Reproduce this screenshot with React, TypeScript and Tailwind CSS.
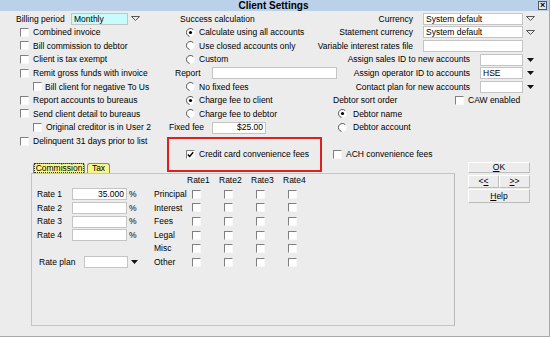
import type { ReactNode } from "react";

// Classic Windows-style controls, drawn small to match the dialog scale

function Check({ checked = false }: { checked?: boolean }) {
  return (
    <span className="w-[9px] h-[9px] shrink-0 bg-white border border-[#808080] border-r-[#f8f8f8] border-b-[#f8f8f8] flex items-center justify-center">
      {checked && (
        <svg width="7" height="7" viewBox="0 0 7 7">
          <path d="M0.8 3.4 L2.7 5.4 L6.2 1.2" stroke="#000" strokeWidth="1.4" fill="none" />
        </svg>
      )}
    </span>
  );
}

function Radio({ checked = false }: { checked?: boolean }) {
  return (
    <svg width="9" height="9" viewBox="0 0 9 9" className="shrink-0">
      <circle cx="4.5" cy="4.5" r="4" fill="#fff" />
      <path d="M7.3 1.7 A4 4 0 1 0 3.6 8.4" stroke="#555" strokeWidth="1" fill="none" />
      {checked && <circle cx="4.5" cy="4.5" r="1.6" fill="#000" />}
    </svg>
  );
}

function ArrowOutline() {
  return (
    <svg width="9" height="5" viewBox="0 0 9 5">
      <path d="M0.5 0.5 H8.5 L4.5 4.5 Z" fill="none" stroke="#555" strokeWidth="1" />
    </svg>
  );
}

function ArrowSolid() {
  return (
    <svg width="7" height="4" viewBox="0 0 7 4">
      <path d="M0 0 H7 L3.5 4 Z" fill="#111" />
    </svg>
  );
}

function Row({ children, className = "" }: { children?: ReactNode; className?: string }) {
  return <div className={"h-[13.6px] flex items-center whitespace-nowrap " + className}>{children}</div>;
}

function Box({
  w,
  children,
  className = "",
  bg = "bg-white",
}: {
  w: string;
  children?: ReactNode;
  className?: string;
  bg?: string;
}) {
  return (
    <span className={"h-[12px] shrink-0 border border-[#c4c4c4] flex items-center px-[2px] " + w + " " + bg + " " + className}>
      {children}
    </span>
  );
}

function ArrowCell({ solid = false }: { solid?: boolean }) {
  return <span className="w-[10px] shrink-0 flex items-center justify-center">{solid ? <ArrowSolid /> : <ArrowOutline />}</span>;
}

const rateRows = ["Principal", "Interest", "Fees", "Legal", "Misc", "Other"];

export default function App() {
  return (
    <div className="w-[550px] h-[337px] bg-[#ececec] border-r border-b border-[#a8a8a8] overflow-hidden text-[8.5px] leading-none text-black font-['Liberation_Sans',Arial,sans-serif]">
      {/* title bar */}
      <div className="h-[11px] bg-[#bad1e9] flex items-center">
        <div className="flex-1" />
        <div className="text-[10px] font-bold">Client Settings</div>
        <div className="flex-1 flex justify-end pr-[2px]">
          <span className="w-[9px] h-[9px] border border-[#555] bg-[#dfe8f2] flex items-center justify-center text-[9px] font-bold leading-none">×</span>
        </div>
      </div>

      {/* top fields */}
      <div className="flex pt-[1px]">
        <div className="w-[169px] shrink-0 pl-[16px]">
          <Row>
            <span className="w-[55px] shrink-0">Billing period</span>
            <Box w="w-[57px]" bg="bg-[#c8fcfc]">Monthly</Box>
            <span className="ml-[2px]"><ArrowCell /></span>
          </Row>
          <Row className="pl-[4px] gap-[4px]"><Check />Combined invoice</Row>
          <Row className="pl-[4px] gap-[4px]"><Check />Bill commission to debtor</Row>
          <Row className="pl-[4px] gap-[4px]"><Check />Client is tax exempt</Row>
          <Row className="pl-[4px] gap-[4px]"><Check />Remit gross funds with invoice</Row>
          <Row className="pl-[17px] gap-[3px]"><Check />Bill client for negative To Us</Row>
          <Row className="pl-[4px] gap-[4px]"><Check />Report accounts to bureaus</Row>
          <Row className="pl-[4px] gap-[4px]"><Check />Send client detail to bureaus</Row>
          <Row className="pl-[17px] gap-[4px]"><Check />Original creditor is in User 2</Row>
        </div>

        <div className="w-[164px] shrink-0">
          <Row className="pl-[11px]">Success calculation</Row>
          <Row className="pl-[17px] gap-[4px]"><Radio checked />Calculate using all accounts</Row>
          <Row className="pl-[17px] gap-[4px]"><Radio />Use closed accounts only</Row>
          <Row className="pl-[17px] gap-[4px]"><Radio />Custom</Row>
          <Row className="pl-[6px]">
            <span className="w-[37px] shrink-0">Report</span>
            <Box w="w-[125px]" />
          </Row>
          <Row className="pl-[17px] gap-[4px]"><Radio />No fixed fees</Row>
          <Row className="pl-[17px] gap-[4px]"><Radio checked />Charge fee to client</Row>
          <Row className="pl-[17px] gap-[4px]"><Radio />Charge fee to debtor</Row>
          <Row>
            <span className="w-[43px] shrink-0">Fixed fee</span>
            <Box w="w-[54px]" className="justify-end">$25.00</Box>
          </Row>
        </div>

        <div className="w-[216px] shrink-0">
          <Row className="justify-end pr-[14px]">
            <span className="shrink-0">Currency</span>
            <Box w="w-[100px]" className="ml-[10px]">System default</Box>
            <span className="ml-[2px]"><ArrowCell /></span>
          </Row>
          <Row className="justify-end pr-[14px]">
            <span className="shrink-0">Statement currency</span>
            <Box w="w-[100px]" className="ml-[10px]">System default</Box>
            <span className="ml-[2px]"><ArrowCell /></span>
          </Row>
          <Row className="justify-end pr-[14px]">
            <span className="shrink-0">Variable interest rates file</span>
            <Box w="w-[100px]" className="ml-[10px]" />
            <span className="ml-[2px] w-[10px] shrink-0" />
          </Row>
          <Row className="justify-end pr-[14px]">
            <span className="shrink-0">Assign sales ID to new accounts</span>
            <Box w="w-[43px]" className="ml-[10px]" />
            <span className="ml-[2px]"><ArrowCell solid /></span>
          </Row>
          <Row className="justify-end pr-[14px]">
            <span className="shrink-0">Assign operator ID to accounts</span>
            <Box w="w-[43px]" className="ml-[10px]">HSE</Box>
            <span className="ml-[2px]"><ArrowCell solid /></span>
          </Row>
          <Row className="justify-end pr-[14px]">
            <span className="shrink-0">Contact plan for new accounts</span>
            <Box w="w-[43px]" className="ml-[10px]" />
            <span className="ml-[2px]"><ArrowCell solid /></span>
          </Row>
          <Row>
            <span className="w-[122px] shrink-0">Debtor sort order</span>
            <Check />
            <span className="ml-[4px]">CAW enabled</span>
          </Row>
          <Row className="pl-[5px] gap-[6px]"><Radio checked />Debtor name</Row>
          <Row className="pl-[5px] gap-[6px]"><Radio />Debtor account</Row>
        </div>
      </div>

      {/* band: delinquent row, tabs, convenience fees, OK */}
      <div className="flex h-[38.6px]">
        <div className="w-[167px] shrink-0 flex flex-col">
          <Row className="pl-[20px] gap-[4px]"><Check />Delinquent 31 days prior to list</Row>
          <div className="mt-auto pl-[33px] flex items-end gap-[2px] h-[10px]">
            <span className="h-[10px] w-[52px] bg-[#f6f68c] border border-b-0 border-[#8a8a6a] rounded-t-[3px] flex items-center justify-center">
              <span className="border border-dotted border-[#333] px-[1px] leading-[8px]">Commission</span>
            </span>
            <span className="h-[10px] w-[23px] bg-[#f6f68c] border border-b-0 border-[#8a8a6a] rounded-t-[3px] flex items-center justify-center">
              Tax
            </span>
          </div>
        </div>
        <div className="w-[155px] h-[35px] mt-[2.6px] shrink-0 border-2 border-[#e0201c] flex items-center pl-[17px] gap-[4px] whitespace-nowrap">
          <Check checked />
          Credit card convenience fees
        </div>
        <div className="w-[146px] h-[35px] mt-[2.6px] shrink-0 flex items-center pl-[11px] gap-[4px] whitespace-nowrap">
          <Check />
          ACH convenience fees
        </div>
        <div className="mt-[27.6px] w-[62px] h-[11px] shrink-0 border border-white border-r-[#bcbcbc] border-b-[#bcbcbc] flex items-center justify-center">
          <span><u>O</u>K</span>
        </div>
      </div>

      {/* tab panel and side buttons */}
      <div className="flex">
        <div className="ml-[31px] w-[424px] h-[153px] shrink-0 border border-[#c4c4c4] border-r-[#b8b8b8]">
          <Row>
            <span className="w-[122px] shrink-0" />
            <span className="w-[33px] shrink-0" />
            {["Rate1", "Rate2", "Rate3", "Rate4"].map((r) => (
              <span key={r} className="w-[32px] shrink-0">{r}</span>
            ))}
          </Row>
          {rateRows.map((label, i) => (
            <Row key={label}>
              <span className="w-[122px] shrink-0 flex items-center">
                {i < 4 && (
                  <>
                    <span className="pl-[5px] w-[40px] shrink-0">Rate {i + 1}</span>
                    <Box w="w-[55px]" className="justify-end">{i === 0 ? "35.000" : ""}</Box>
                    <span className="ml-[2px]">%</span>
                  </>
                )}
                {i === 5 && (
                  <>
                    <span className="pl-[7px] w-[52px] shrink-0">Rate plan</span>
                    <Box w="w-[44px]" />
                    <span className="ml-[1px]"><ArrowCell solid /></span>
                  </>
                )}
              </span>
              <span className="w-[33px] shrink-0">{label}</span>
              {[0, 1, 2, 3].map((c) => (
                <span key={c} className="w-[32px] shrink-0 pl-[5px]">
                  <Check />
                </span>
              ))}
            </Row>
          ))}
        </div>
        <div className="ml-[13px] pt-[2px] w-[62px] shrink-0">
          <div className="flex h-[13px]">
            <span className="w-[31px] border border-white border-r-[#bcbcbc] border-b-[#bcbcbc] flex items-center justify-center">
              &lt;<u>&lt;</u>
            </span>
            <span className="w-[31px] border border-white border-r-[#bcbcbc] border-b-[#bcbcbc] flex items-center justify-center">
              <u>&gt;</u>&gt;
            </span>
          </div>
          <div className="mt-[1px] h-[14px] border border-white border-r-[#bcbcbc] border-b-[#bcbcbc] flex items-center justify-center">
            <span><u>H</u>elp</span>
          </div>
        </div>
      </div>
    </div>
  );
}
